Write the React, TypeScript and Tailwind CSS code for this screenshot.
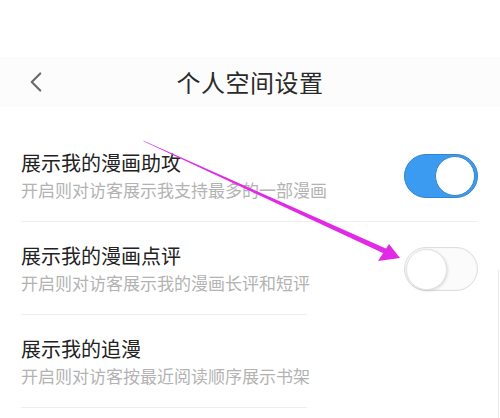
import { ChevronLeft } from "lucide-react";

type Item = {
  title: string;
  desc: string;
  on?: boolean;
  hasToggle: boolean;
  shortLine?: boolean;
};

const items: Item[] = [
  { title: "展示我的漫画助攻", desc: "开启则对访客展示我支持最多的一部漫画", on: true, hasToggle: true },
  { title: "展示我的漫画点评", desc: "开启则对访客展示我的漫画长评和短评", on: false, hasToggle: true, shortLine: true },
  { title: "展示我的追漫", desc: "开启则对访客按最近阅读顺序展示书架", hasToggle: false, shortLine: true },
];

function Toggle({ on }: { on?: boolean }) {
  return on ? (
    <div className="w-[74px] h-[44px] rounded-full bg-[#3a9bf0] border border-[#3585c8] flex items-center justify-end pr-[2px]">
      <div className="w-[40px] h-[40px] rounded-full bg-white border border-[#3a86c9]" />
    </div>
  ) : (
    <div className="w-[74px] h-[44px] rounded-full bg-[#fbfbfb] border border-[#dedede] flex items-center pl-[1px] shadow-[inset_0_0_2px_rgba(0,0,0,0.06)]">
      <div className="w-[41px] h-[41px] rounded-full bg-white border border-[#e2e2e2] shadow-[1px_1px_3px_rgba(0,0,0,0.12)]" />
    </div>
  );
}

export default function App() {
  return (
    <div
      className="relative w-[500px] h-[418px] bg-white overflow-hidden"
      style={{ fontFamily: '"Noto Sans CJK SC", "Noto Sans", sans-serif' }}
    >
      <div className="h-[57px]" />
      {/* 标题栏 */}
      <div className="relative h-[50px] w-full bg-[#fcfcfc] flex items-center justify-center">
        <ChevronLeft size={34} strokeWidth={1.5} className="absolute left-[19px] text-[#6b6b6b]" />
        <span className="text-[24px] leading-[30px] text-[#2a2a2a] tracking-[0.5px]">个人空间设置</span>
      </div>

      <div className="h-[22px]" />

      {/* 设置项 */}
      <div className="px-[21px]">
        {items.map((it) => (
          <div key={it.title}>
            <div className="flex items-center justify-between pt-[22px] pb-[20px]">
              <div className="flex flex-col">
                <span className="text-[20px] leading-[24px] text-[#222]">{it.title}</span>
                <span className="mt-[4px] text-[17px] leading-[22px] text-[#b3b3b3]">{it.desc}</span>
              </div>
              {it.hasToggle && <div className="mr-[1px]"><Toggle on={it.on} /></div>}
            </div>
            <div className={`h-px bg-[#eeeeee] ${it.shortLine ? "w-[286px]" : "w-[456px]"}`} />
          </div>
        ))}
      </div>

      <div className="absolute right-[1px] top-[270px] w-px h-[148px] bg-[#e8e8e8]" />

      {/* 标注箭头 */}
      <svg className="absolute inset-0 pointer-events-none" width="500" height="418">
        <polygon points="143,140.5 144,141.5 385,254 387,249" fill="#e02ae6" />
        <polygon points="400,258 378,261 389,244" fill="#e02ae6" />
      </svg>
    </div>
  );
}
